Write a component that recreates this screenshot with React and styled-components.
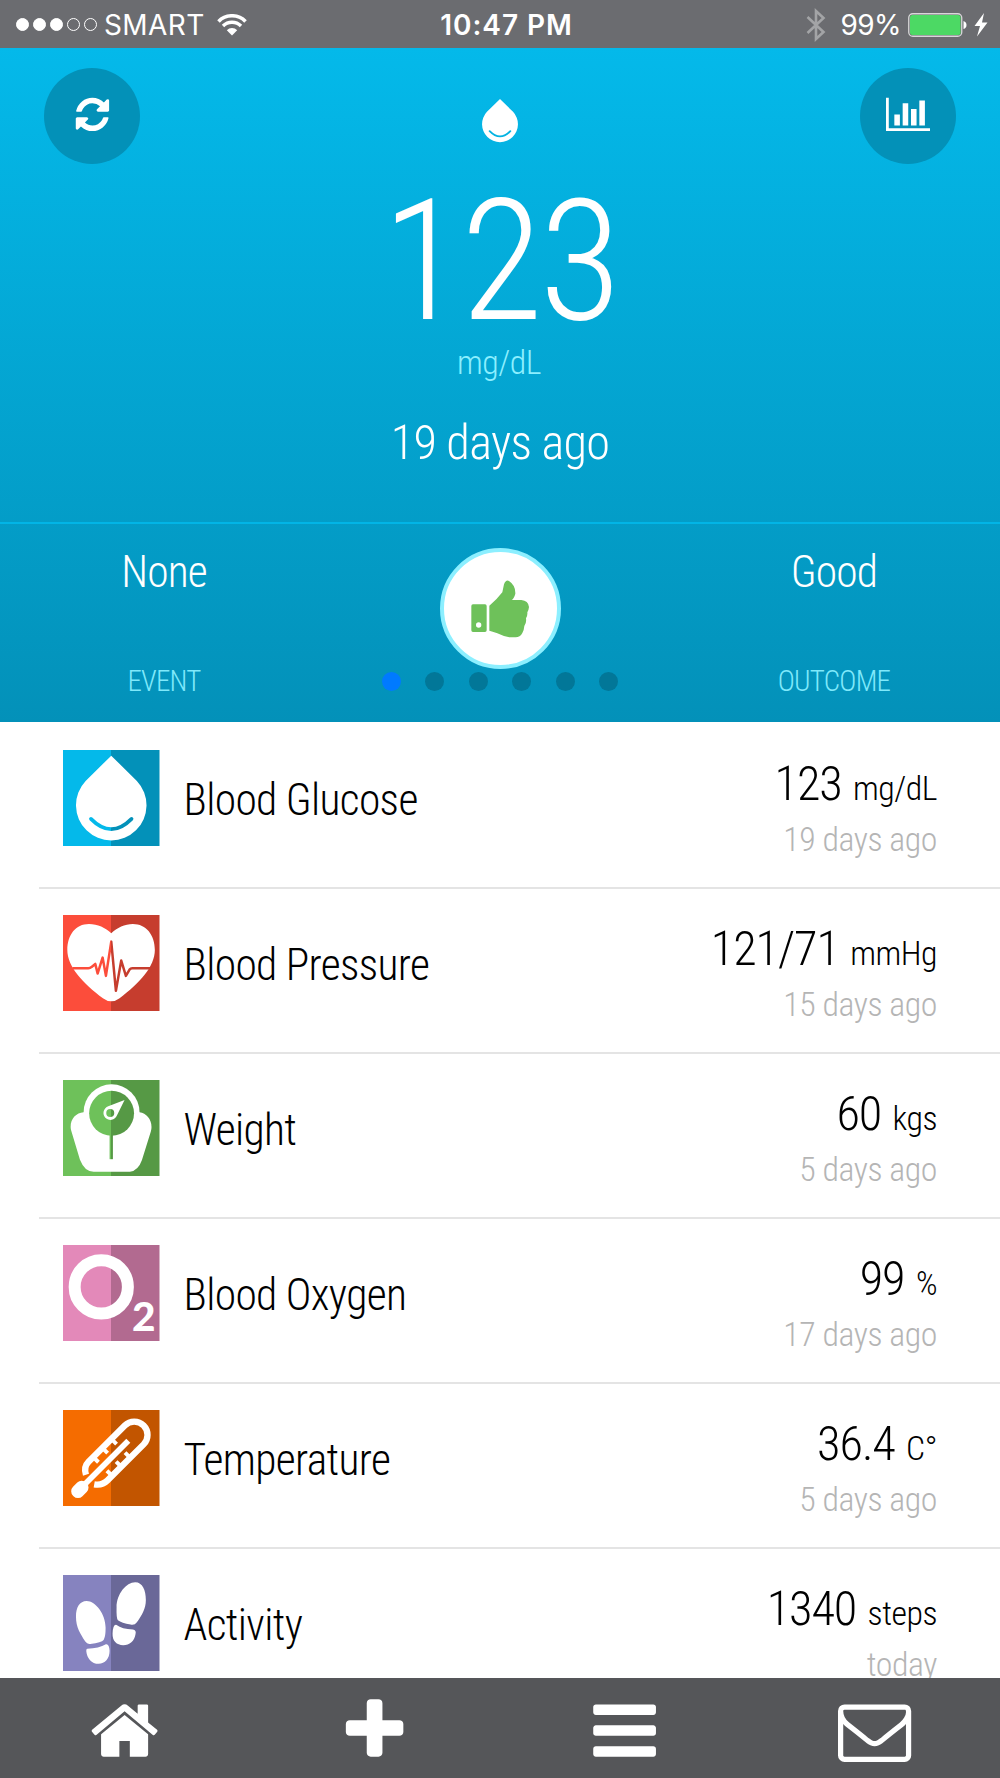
import React from 'react';
import styled, { createGlobalStyle } from 'styled-components';

const GlobalStyle = createGlobalStyle`
  * {
    box-sizing: border-box;
  }
  body {
    margin: 0;
    background-color: #fff;
    font-family: 'Roboto Condensed', Roboto, sans-serif;
    font-stretch: 75%;
    font-weight: 300;
  }
  svg {
    display: block;
    flex-shrink: 0;
  }
`;

const Screen = styled.div`
  width: 1000px;
  height: 1778px;
  display: flex;
  flex-direction: column;
  overflow: hidden;
`;

const StatusBar = styled.header`
  height: 48px;
  flex-shrink: 0;
  padding: 1px 12px 0 16px;
  display: grid;
  grid-template-columns: 1fr auto 1fr;
  align-items: center;
  background-color: #6b6c70;
  color: #fff;
  font-family: Inter, sans-serif;
  font-stretch: 100%;
  font-weight: 400;
  font-size: 28px;
`;

const StatusSide = styled.div`
  display: flex;
  align-items: center;
  justify-content: ${(props) => (props.$end ? 'flex-end' : 'flex-start')};
`;

const Signal = styled.div`
  display: flex;
  gap: 3.5px;
  margin-right: 7px;
`;

const SignalDot = styled.span`
  width: 13.4px;
  height: 13.4px;
  border-radius: 50%;
  border: 1px solid #fff;
  background-color: ${(props) => (props.$on ? '#fff' : 'transparent')};
`;

const Carrier = styled.span`
  padding-top: 1px;
  margin-right: 12.5px;
  letter-spacing: 0.4px;
`;

const Clock = styled.span`
  padding-top: 1px;
  font-weight: 600;
  letter-spacing: 0.95px;
  margin-left: 9px;
`;

const Percent = styled.span`
  padding-top: 1px;
  margin: 0 7px 0 15px;
  letter-spacing: -0.6px;
`;

const Hero = styled.section`
  height: 674px;
  flex-shrink: 0;
  color: #fff;
  background: linear-gradient(#04b9ea, #0391b9);
`;

const Reading = styled.div`
  height: 474px;
  padding: 20px 44px 0;
  display: flex;
  flex-direction: column;
  align-items: center;
`;

const HeroBar = styled.div`
  width: 100%;
  height: 96px;
  display: flex;
  justify-content: space-between;
  align-items: center;
`;

const Drop = styled.svg`
  width: 36px;
  height: 43.2px;
  margin-top: 10px;
`;

const RoundButton = styled.button`
  width: 96px;
  height: 96px;
  padding: 0 0 3px;
  border: none;
  border-radius: 50%;
  background-color: #0391b8;
  color: #fff;
  display: flex;
  justify-content: center;
  align-items: center;
`;

const BigValue = styled.div`
  margin: 17px 0 1px;
  font-size: 169px;
  line-height: 160px;
  letter-spacing: -3.6px;
`;

const BigUnit = styled.div`
  margin-right: 2px;
  font-size: 33.8px;
  line-height: 42px;
  letter-spacing: -0.5px;
  color: #8cefff;
`;

const BigTime = styled.div`
  margin-top: 29px;
  font-size: 48.3px;
  line-height: 60px;
  letter-spacing: -0.7px;
`;

const Summary = styled.div`
  height: 200px;
  padding-top: 23px;
  border-top: 2px solid #02b5e6;
  display: flex;
  justify-content: space-between;
`;

const Fact = styled.div`
  width: 330px;
  padding-right: 2px;
  display: flex;
  flex-direction: column;
  align-items: center;
  gap: 65px;
`;

const FactValue = styled.div`
  font-size: 43.5px;
  line-height: 52px;
  letter-spacing: -0.85px;
`;

const FactLabel = styled.div`
  font-size: 29px;
  line-height: 34px;
  letter-spacing: -0.8px;
  color: #7fe9fb;
`;

const Verdict = styled.div`
  display: flex;
  flex-direction: column;
  align-items: center;
  gap: 3px;
  padding-top: 1px;
`;

const Badge = styled.div`
  width: 121px;
  height: 121px;
  border-radius: 50%;
  border: 4.5px solid #8cefff;
  background-color: #fff;
  color: #6ec15a;
  display: flex;
  justify-content: center;
  align-items: center;
`;

const Pager = styled.div`
  display: flex;
  gap: 24.5px;
`;

const PagerDot = styled.span`
  width: 19px;
  height: 19px;
  border-radius: 50%;
  background-color: ${(props) => (props.$active ? '#007aff' : '#027798')};
`;

const List = styled.ul`
  flex: 1;
  min-height: 0;
  margin: 0;
  padding: 2px 0 0 39px;
  list-style: none;
  overflow: hidden;
  color: #000;
`;

const Row = styled.li`
  height: 165px;
  padding: 0 63px 0 24px;
  border-bottom: 2px solid #e4e4e4;
  display: flex;
  align-items: flex-start;
`;

const Tile = styled.svg`
  width: 96.5px;
  height: 96.5px;
  margin-top: 25.5px;
`;

const Name = styled.div`
  flex: 1;
  margin: 51px 0 0 24px;
  font-size: 43.5px;
  line-height: 52px;
  letter-spacing: -0.65px;
`;

const Measure = styled.div`
  padding-top: 31px;
  text-align: right;
`;

const Value = styled.div`
  height: 58px;
  font-size: 48.3px;
  line-height: 58px;
  letter-spacing: -1.1px;
  white-space: nowrap;
`;

const Unit = styled.span`
  margin-left: 1.6px;
  font-size: 33.8px;
  letter-spacing: -0.5px;
`;

const Ago = styled.div`
  margin-top: 7px;
  font-size: 33.8px;
  line-height: 40px;
  letter-spacing: -0.43px;
  color: #b5b5b5;
`;

const TabBar = styled.nav`
  height: 100px;
  flex-shrink: 0;
  padding-top: 15.6px;
  display: grid;
  grid-template-columns: repeat(4, 1fr);
  justify-items: center;
  align-items: start;
  background-color: #555659;
  color: #fff;
`;

const glyphs = {
  refresh:
    'M1639 1056q0 5-1 7-64 268-268 434.5t-478 166.5q-146 0-282.5-55t-243.5-157l-129 129q-19 19-45 19t-45-19-19-45v-448q0-26 19-45t45-19h448q26 0 45 19t19 45-19 45l-137 137q71 66 161 102t187 36q134 0 250-65t186-179q11-17 53-117 8-23 30-23h192q13 0 22.5 9.5t9.5 22.5zm25-800v448q0 26-19 45t-45 19h-448q-26 0-45-19t-19-45 19-45l138-138q-148-137-349-137-134 0-250 65t-186 179q-11 17-53 117-8 23-30 23h-199q-13 0-22.5-9.5t-9.5-22.5v-7q65-268 270-434.5t480-166.5q146 0 284 55.5t245 156.5l130-129q19-19 45-19t45 19 19 45z',
  chart:
    'M640 896v512h-256v-512h256zm384-512v1024h-256v-1024h256zm1024 1152v128h-2048v-1536h128v1408h1920zm-640-896v768h-256v-768h256zm384-384v1152h-256v-1152h256z',
  home: 'M1472 992v480q0 26-19 45t-45 19h-384v-384h-256v384h-384q-26 0-45-19t-19-45v-480q0-1 .5-3t.5-3l575-474 575 474q1 2 1 6zm223-69l-62 74q-8 9-21 11h-3q-13 0-21-7l-692-577-692 577q-12 8-24 7-13-2-21-11l-62-74q-8-10-7-23.5t11-21.5l719-599q32-26 76-26t76 26l244 204v-195q0-14 9-23t23-9h192q14 0 23 9t9 23v408l219 182q10 8 11 21.5t-7 23.5z',
  plus: 'M1600 736v192q0 40-28 68t-68 28h-416v416q0 40-28 68t-68 28h-192q-40 0-68-28t-28-68v-416h-416q-40 0-68-28t-28-68v-192q0-40 28-68t68-28h416v-416q0-40 28-68t68-28h192q40 0 68 28t28 68v416h416q40 0 68 28t28 68z',
  bars: 'M1664 1344v128q0 26-19 45t-45 19h-1408q-26 0-45-19t-19-45v-128q0-26 19-45t45-19h1408q26 0 45 19t19 45zm0-512v128q0 26-19 45t-45 19h-1408q-26 0-45-19t-19-45v-128q0-26 19-45t45-19h1408q26 0 45 19t19 45zm0-512v128q0 26-19 45t-45 19h-1408q-26 0-45-19t-19-45v-128q0-26 19-45t45-19h1408q26 0 45 19t19 45z',
  mail: 'M1664 1504v-768q-32 36-69 66-268 206-426 338-51 43-83 67t-86.5 48.5-102.5 24.5h-2q-48 0-102.5-24.5t-86.5-48.5-83-67q-158-132-426-338-37-30-69-66v768q0 13 9.5 22.5t22.5 9.5h1472q13 0 22.5-9.5t9.5-22.5zm0-1051v-24.5l-.5-13-3-12.5-5.5-9-9-7.5-14-2.5h-1472q-13 0-22.5 9.5t-9.5 22.5q0 168 147 284 193 152 401 317 6 5 35 29.5t46 37.5 44.5 31.5 50.5 27.5 43 9h2q20 0 43-9t50.5-27.5 44.5-31.5 46-37.5 35-29.5q208-165 401-317 54-43 100.5-115.5t46.5-131.5zm128-37v1088q0 66-47 113t-113 47h-1472q-66 0-113-47t-47-113v-1088q0-66 47-113t113-47h1472q66 0 113 47t47 113z',
};

const Glyph = ({ name, size, box = 1792 }) => (
  <svg
    width={(size * box) / 1792}
    height={size}
    viewBox={`0 0 ${box} 1792`}
    fill="currentColor"
  >
    <path d={glyphs[name]} />
  </svg>
);

const ThumbUp = () => (
  <svg width="58" height="58" viewBox="0 0 174 174" fill="currentColor">
    <path
      fillRule="evenodd"
      d="M6 73H42Q47 73 47 78V151Q47 156 42 156H6Q1 156 1 151V78Q1 73 6 73ZM23 127A8 8 0 1 0 23 143A8 8 0 1 0 23 127Z"
    />
    <path d="M55 77Q79 57 94 37L99 13Q105-2 114 3Q134 16 133 41Q129 56 122 60H151Q172 62 174 81Q173 91 169 97Q170 107 165 115Q167 129 160 138Q159 151 154 159Q147 172 134 172H115Q97 169 79 160Q63 154 55 152Z" />
  </svg>
);

const DROP = 'M145 17L222 93A106 106 0 1 1 68 93Z';
const SMILE = 'M84 207Q145 269 206 207';

// each drawing gets `paint`, the two-tone fill of the tile behind it
const drawings = {
  glucose: (paint) => (
    <>
      <path d={DROP} fill="#fff" />
      <path d={SMILE} fill="none" stroke={paint} strokeWidth="11" strokeLinecap="round" />
    </>
  ),
  pressure: (paint) => (
    <>
      <path
        d="M145 55C128 38 104 27 78 27C38 27 13 60 13 105C13 155 60 205 120 250Q145 269 170 250C230 205 276 155 276 105C276 60 250 27 210 27C186 27 162 38 145 55Z"
        fill="#fff"
      />
      <path
        d="M28 160H76Q82 160 86 156L97 147L104 176L119 128L129 183L145 80L159 228L175 137L189 183L200 164Q203 160 208 160H262"
        fill="none"
        stroke={paint}
        strokeWidth="7.5"
        strokeLinejoin="round"
      />
    </>
  ),
  weight: (paint) => (
    <>
      <circle cx="146" cy="97" r="84" fill="#fff" />
      <path
        d="M62 97C40 99 23 115 23 141Q23 147 25 153L51 240Q65 276 92 276H201Q226 272 237 241L264 155Q266 148 266 141C266 118 250 99 230 97Z"
        fill="#fff"
      />
      <circle cx="146" cy="100" r="67.5" fill={paint} />
      <path d="M145 160V238" stroke={paint} strokeWidth="10" />
      <path d="M185 60L136 79A21 21 0 1 0 162 107Z" fill="#fff" />
      <circle cx="142" cy="99" r="12" fill={paint} />
    </>
  ),
  oxygen: () => (
    <>
      <circle cx="115" cy="126" r="80" fill="none" stroke="#fff" strokeWidth="36" />
      <text x="207" y="259" fill="#fff" fontFamily="Lato" fontWeight="900" fontSize="122">
        2
      </text>
    </>
  ),
  temperature: () => (
    <g transform="translate(214 75) rotate(45)" fill="none" stroke="#fff">
      <path
        d="M-18 187Q-40 176-40 154V0A40 40 0 0 1 40 0V154Q40 176 20 190"
        strokeWidth="19"
      />
      <path d="M0 25V210" strokeWidth="17" />
      <path
        d="M-36 57H-18M-36 95H-18M-36 134H-18M36 57H18M36 95H18M36 134H18"
        strokeWidth="12"
      />
      <rect x="-20" y="203" width="40" height="56" rx="19" fill="#fff" stroke="none" />
    </g>
  ),
  activity: () => (
    <g fill="#fff">
      <path d="M71 78C98 78 128 118 128 158C128 176 127 186 122 195Q116 203 82 207Q73 209 67 200C52 177 39 158 39 125C39 97 50 78 71 78Z" />
      <path d="M73 222Q108 220 129 208Q139 206 140 228C140 252 126 267 107 267C86 267 72 250 70 229Q69 223 73 222Z" />
      <path d="M217 22C239 22 249 46 249 75C249 101 237 121 222 142Q215 152 203 149Q176 144 165 136Q160 130 161 97C161 58 190 22 217 22Z" />
      <path d="M161 150Q177 162 210 164Q221 166 218 177C215 198 200 211 181 211C161 211 148 198 149 176Q150 147 161 150Z" />
    </g>
  ),
};

const MetricTile = ({ kind, left, right }) => (
  <Tile viewBox="0 0 290 290">
    <defs>
      <linearGradient id={kind} gradientUnits="userSpaceOnUse" x1="0" y1="0" x2="290" y2="0">
        <stop offset="0.498" stopColor={left} />
        <stop offset="0.498" stopColor={right} />
      </linearGradient>
    </defs>
    <rect width="290" height="290" fill={`url(#${kind})`} />
    {drawings[kind](`url(#${kind})`)}
  </Tile>
);

const metrics = [
  { kind: 'glucose', name: 'Blood Glucose', value: '123', unit: 'mg/dL', ago: '19 days ago', left: '#04b9ea', right: '#0391b9' },
  { kind: 'pressure', name: 'Blood Pressure', value: '121/71', unit: 'mmHg', ago: '15 days ago', left: '#fc4d3b', right: '#c63d2e' },
  { kind: 'weight', name: 'Weight', value: '60', unit: 'kgs', ago: '5 days ago', left: '#6ec15a', right: '#569945' },
  { kind: 'oxygen', name: 'Blood Oxygen', value: '99', unit: '%', ago: '17 days ago', left: '#e389b9', right: '#b26a90' },
  { kind: 'temperature', name: 'Temperature', value: '36.4', unit: 'C°', ago: '5 days ago', left: '#f56c00', right: '#c25500' },
  { kind: 'activity', name: 'Activity', value: '1340', unit: 'steps', ago: 'today', left: '#8683bf', right: '#6a6898' },
];

const App = () => (
  <Screen>
    <GlobalStyle />
    <StatusBar>
      <StatusSide>
        <Signal>
          <SignalDot $on />
          <SignalDot $on />
          <SignalDot $on />
          <SignalDot />
          <SignalDot />
        </Signal>
        <Carrier>SMART</Carrier>
        <svg width="30" height="22" viewBox="0 0 30 22" fill="none" stroke="#fff">
          <path d="M1.5 7.4A19 19 0 0 1 28.5 7.4" strokeWidth="3.6" />
          <path d="M6 12A12.7 12.7 0 0 1 24 12" strokeWidth="3.4" />
          <path d="M15 21.5L9.8 16.2A7.4 7.4 0 0 1 20.2 16.2Z" fill="#fff" stroke="none" />
        </svg>
      </StatusSide>
      <Clock>10:47 PM</Clock>
      <StatusSide $end>
        <svg width="20" height="34" viewBox="0 0 20 34" fill="none" stroke="#a3a4a6" strokeWidth="2.6">
          <path d="M1.5 9L17.5 24L10 31V3L17.5 10L1.5 25" />
        </svg>
        <Percent>99%</Percent>
        <svg width="80" height="24" viewBox="0 0 80 24">
          <rect x="0.75" y="0.75" width="53" height="22.5" rx="4" fill="none" stroke="#d8d8d9" strokeWidth="1.3" />
          <rect x="2" y="2" width="50.5" height="20" rx="2.5" fill="#4cd964" />
          <path d="M55.5 8Q58.5 9 58.5 12Q58.5 15 55.5 16Z" fill="#fff" />
          <path d="M76 0L66.5 13H72L69 23.5L79.5 9.5H74Z" fill="#fff" />
        </svg>
      </StatusSide>
    </StatusBar>

    <Hero>
      <Reading>
        <HeroBar>
          <RoundButton>
            <Glyph name="refresh" size={38.9} />
          </RoundButton>
          <Drop viewBox="39 17 212 255">
            <path d={DROP} fill="#fff" />
            <path d={SMILE} fill="none" stroke="#04b3e2" strokeWidth="11" strokeLinecap="round" />
          </Drop>
          <RoundButton>
            <Glyph name="chart" size={38.9} box={2048} />
          </RoundButton>
        </HeroBar>
        <BigValue>123</BigValue>
        <BigUnit>mg/dL</BigUnit>
        <BigTime>19 days ago</BigTime>
      </Reading>
      <Summary>
        <Fact>
          <FactValue>None</FactValue>
          <FactLabel>EVENT</FactLabel>
        </Fact>
        <Verdict>
          <Badge>
            <ThumbUp />
          </Badge>
          <Pager>
            {[0, 1, 2, 3, 4, 5].map((page) => (
              <PagerDot key={page} $active={page === 0} />
            ))}
          </Pager>
        </Verdict>
        <Fact>
          <FactValue>Good</FactValue>
          <FactLabel>OUTCOME</FactLabel>
        </Fact>
      </Summary>
    </Hero>

    <List>
      {metrics.map(({ kind, name, value, unit, ago, left, right }) => (
        <Row key={kind}>
          <MetricTile kind={kind} left={left} right={right} />
          <Name>{name}</Name>
          <Measure>
            <Value>
              {value} <Unit>{unit}</Unit>
            </Value>
            <Ago>{ago}</Ago>
          </Measure>
        </Row>
      ))}
    </List>

    <TabBar>
      <Glyph name="home" size={73.2} />
      <Glyph name="plus" size={73.2} />
      <Glyph name="bars" size={73.2} />
      <Glyph name="mail" size={73.2} />
    </TabBar>
  </Screen>
);

export default App;
